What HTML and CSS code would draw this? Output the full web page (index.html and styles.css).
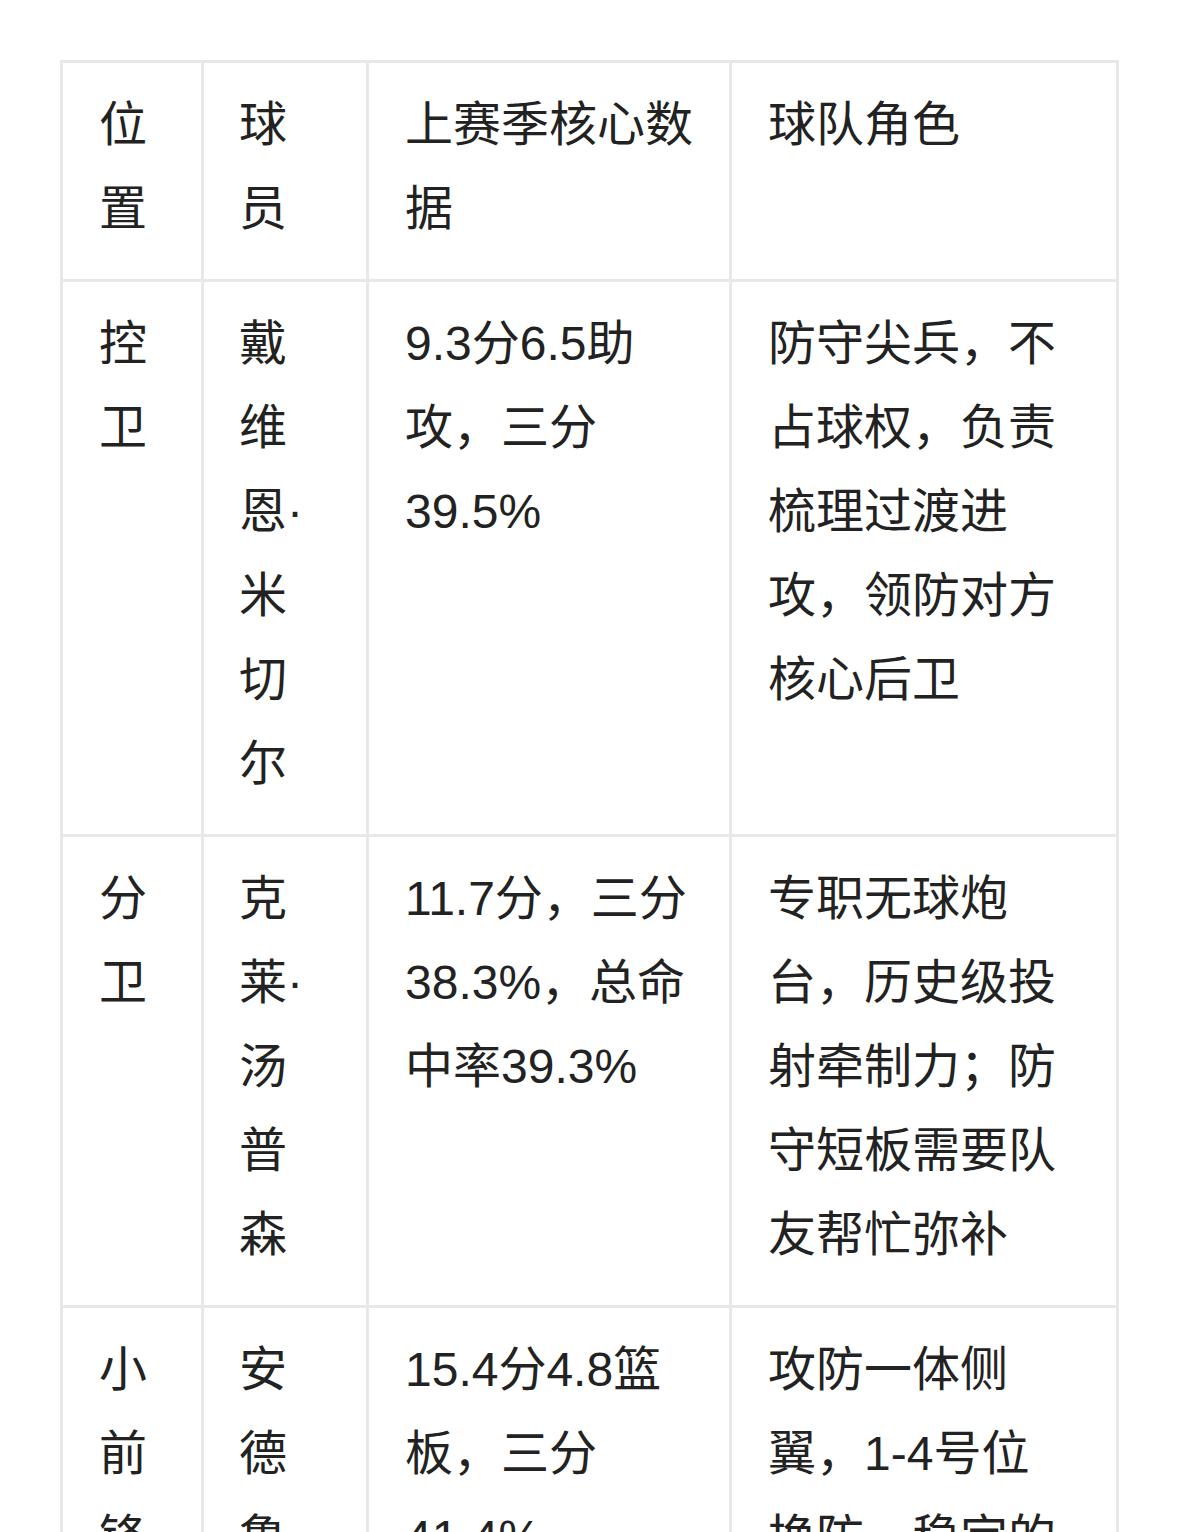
FILE: index.html
```html
<!DOCTYPE html>
<html lang="zh-CN">
<head>
<meta charset="utf-8">
<title>球队阵容</title>
<link rel="stylesheet" href="styles.css">
</head>
<body>
<div class="page">
<table class="roster">
<thead>
<tr>
<th class="c1">位置</th>
<th class="c2">球员</th>
<th class="c3">上赛季核心数据</th>
<th class="c4">球队角色</th>
</tr>
</thead>
<tbody>
<tr>
<td class="c1">控卫</td>
<td class="c2">戴维恩·米切尔</td>
<td class="c3">9.3分6.5助攻，三分39.5%</td>
<td class="c4">防守尖兵，不占球权，负责梳理过渡进攻，领防对方核心后卫</td>
</tr>
<tr>
<td class="c1">分卫</td>
<td class="c2">克莱·汤普森</td>
<td class="c3">11.7分，三分38.3%，总命中率39.3%</td>
<td class="c4">专职无球炮台，历史级投射牵制力；防守短板需要队友帮忙弥补</td>
</tr>
<tr>
<td class="c1">小前锋</td>
<td class="c2">安德鲁·威金斯</td>
<td class="c3">15.4分4.8篮板，三分41.4%</td>
<td class="c4">攻防一体侧翼，1-4号位换防，稳定的二号得分点</td>
</tr>
</tbody>
</table>
</div>
</body>
</html>
```
FILE: styles.css
```css
html, body {
  margin: 0;
  padding: 0;
  background: #ffffff;
}
.page {
  padding: 60px;
}
.roster {
  border-collapse: separate;
  border-spacing: 0;
  table-layout: fixed;
  width: 1059px;
  border-top: 3px solid #e8e8e8;
  border-left: 3px solid #e8e8e8;
  font-family: "Liberation Sans", "Noto Sans CJK SC", sans-serif;
  font-size: 48px;
  line-height: 84px;
  color: #222222;
}
.roster th,
.roster td {
  box-sizing: border-box;
  border-right: 3px solid #e8e8e8;
  border-bottom: 3px solid #e8e8e8;
  padding: 20px 36px 28px 36px;
  text-align: left;
  vertical-align: top;
  font-weight: normal;
}
.roster .c1 { width: 141px; }
.roster .c2 { width: 165px; padding-left: 35px; }
.roster .c3 { width: 363px; padding-right: 35px; }
.roster .c4 { width: 387px; padding-right: 48px; }
```
